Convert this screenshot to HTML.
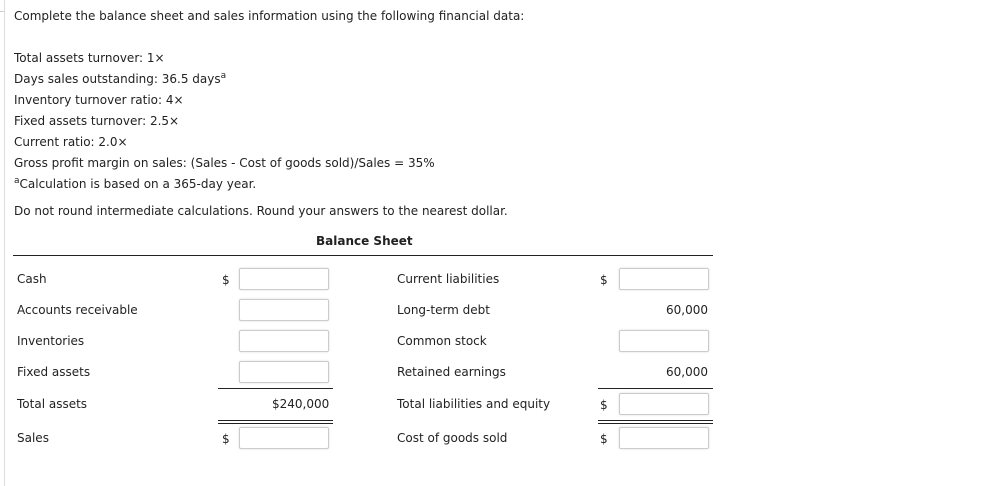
<!DOCTYPE html>
<html><head><style>
body{margin:0;width:1000px;height:486px;background:#fff;position:relative;font-family:"DejaVu Sans","Liberation Sans",sans-serif;font-size:12px;color:#222;overflow:hidden}
.t{position:absolute;white-space:nowrap;line-height:14px;margin-top:1px}
.in{position:absolute;width:88px;height:20px;border:1px solid #ccc;border-radius:2px;box-shadow:0 0 2px #ddd;background:#fff}
.hl{position:absolute;height:1px;background:#222}
</style></head><body>
<div style="position:absolute;left:4px;top:0;width:1px;height:486px;background:#ddd"></div>
<div style="position:absolute;left:0;top:11px;width:4px;height:1px;background:#ccc"></div>
<div class="t" style="left:14px;top:8px">Complete the balance sheet and sales information using the following financial data:</div>
<div class="t" style="left:14px;top:50px">Total assets turnover: 1×</div>
<div class="t" style="left:14px;top:71px">Days sales outstanding: 36.5 days<sup style="font-size:9px;line-height:0">a</sup></div>
<div class="t" style="left:14px;top:92px">Inventory turnover ratio: 4×</div>
<div class="t" style="left:14px;top:113px">Fixed assets turnover: 2.5×</div>
<div class="t" style="left:14px;top:134px">Current ratio: 2.0×</div>
<div class="t" style="left:14px;top:155px">Gross profit margin on sales: (Sales - Cost of goods sold)/Sales = 35%</div>
<div class="t" style="left:14px;top:176px"><sup style="font-size:9px;line-height:0">a</sup>Calculation is based on a 365-day year.</div>
<div class="t" style="left:14px;top:203px">Do not round intermediate calculations. Round your answers to the nearest dollar.</div>
<div class="t" style="left:316px;top:233px;font-weight:bold">Balance Sheet</div>
<div class="hl" style="left:13px;top:255px;width:700px"></div>

<div class="t" style="left:17px;top:271px">Cash</div>
<div class="t" style="left:17px;top:302px">Accounts receivable</div>
<div class="t" style="left:17px;top:333px">Inventories</div>
<div class="t" style="left:17px;top:364px">Fixed assets</div>
<div class="t" style="left:17px;top:396px">Total assets</div>
<div class="t" style="left:17px;top:430px">Sales</div>

<div class="t" style="left:222px;top:272px">$</div>
<div class="in" style="left:239px;top:268px"></div>
<div class="in" style="left:239px;top:299px"></div>
<div class="in" style="left:239px;top:330px"></div>
<div class="in" style="left:239px;top:361px"></div>
<div class="hl" style="left:218px;top:388px;width:115px"></div>
<div class="t" style="left:272px;top:396px">$240,000</div>
<div class="hl" style="left:218px;top:420px;width:115px"></div>
<div class="hl" style="left:218px;top:423px;width:115px"></div>
<div class="t" style="left:222px;top:431px">$</div>
<div class="in" style="left:239px;top:427px"></div>

<div class="t" style="left:397px;top:271px">Current liabilities</div>
<div class="t" style="left:397px;top:302px">Long-term debt</div>
<div class="t" style="left:397px;top:333px">Common stock</div>
<div class="t" style="left:397px;top:364px">Retained earnings</div>
<div class="t" style="left:397px;top:396px">Total liabilities and equity</div>
<div class="t" style="left:397px;top:430px">Cost of goods sold</div>

<div class="t" style="left:600px;top:272px">$</div>
<div class="in" style="left:619px;top:268px"></div>
<div class="t" style="left:666px;top:302px">60,000</div>
<div class="in" style="left:619px;top:330px"></div>
<div class="t" style="left:666px;top:364px">60,000</div>
<div class="hl" style="left:598px;top:388px;width:115px"></div>
<div class="t" style="left:600px;top:397px">$</div>
<div class="in" style="left:619px;top:393px"></div>
<div class="hl" style="left:598px;top:420px;width:115px"></div>
<div class="hl" style="left:598px;top:423px;width:115px"></div>
<div class="t" style="left:600px;top:431px">$</div>
<div class="in" style="left:619px;top:427px"></div>
</body></html>
